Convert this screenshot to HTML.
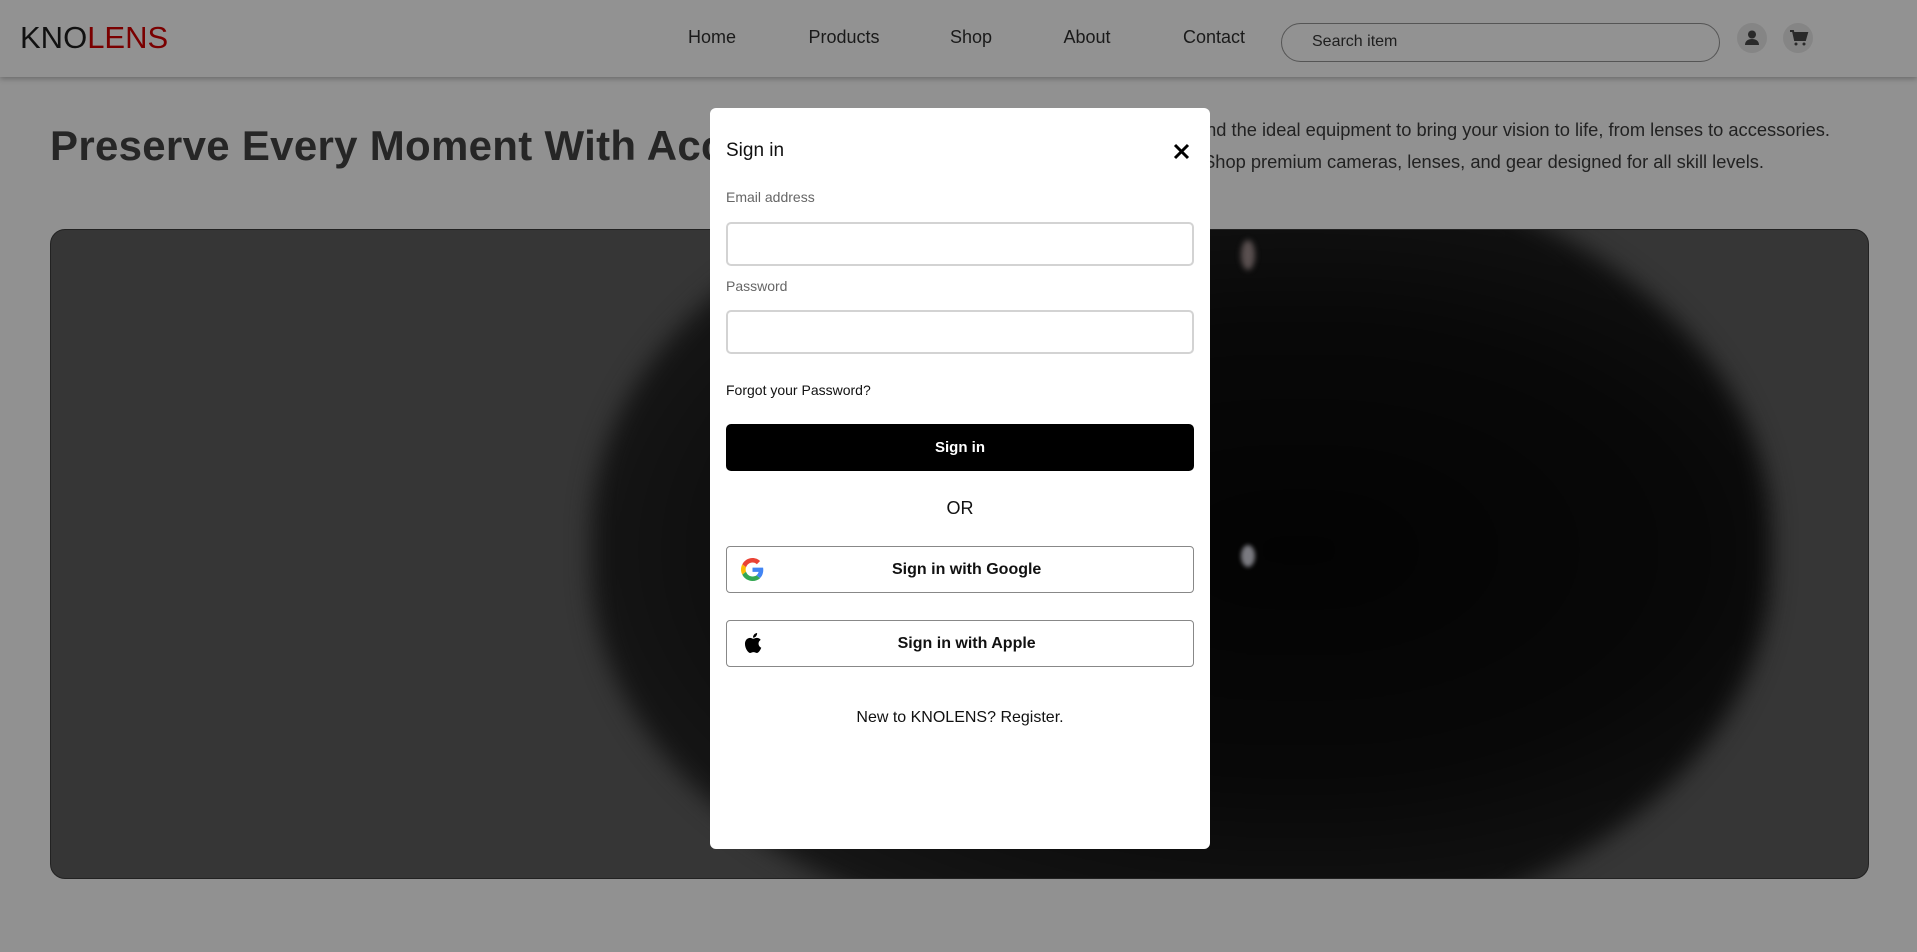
<!DOCTYPE html>
<html><head><meta charset="utf-8"><style>
*{margin:0;padding:0;box-sizing:border-box}
html,body{width:1917px;height:952px;overflow:hidden}
body{background:#919191;font-family:"Liberation Sans",sans-serif;position:relative;color:#1a1a1a}
.abs{position:absolute}
.nav{left:0;top:0;width:1917px;height:77px;background:#929292;box-shadow:0 2px 5px rgba(0,0,0,.25)}
.logo{left:20px;top:20px;font-size:31px;color:#111;letter-spacing:0}
.logo span{color:#7a0000}
.nl{top:27px;font-size:18px;color:#1a1a1a;transform:translateX(-50%)}
.search{left:1281px;top:23px;width:439px;height:39px;border:1px solid #555;border-radius:20px;font-size:16px;padding:9px 0 0 30px;color:#1e1e1e}
.ic{width:30px;height:30px;border-radius:50%;background:#858585;top:23px}
h1{left:50px;top:122px;font-size:42px;font-weight:bold;color:#262626;white-space:nowrap;letter-spacing:.3px}
.p{font-size:18.3px;color:#222;white-space:nowrap;text-align:right}
.hero{left:50px;top:229px;width:1819px;height:650px;border-radius:15px;background:#363636;overflow:hidden;border:1px solid #222}
.modal{left:710px;top:108px;width:500px;height:741px;background:#fff;border-radius:6px}
.lbl{font-size:14px;color:#666}
.inp{left:16px;width:468px;height:44px;border:2px solid #d3d3d3;border-radius:5px}
.btn{left:16px;width:468px;height:47px;border:1px solid #888;border-radius:4px;font-size:16px;font-weight:bold;color:#111;text-align:center;line-height:45px}
</style></head><body>
<div class="abs nav"></div>
<div class="abs logo">KNO<span>LENS</span></div>
<div class="abs nl" style="left:712px">Home</div>
<div class="abs nl" style="left:844px">Products</div>
<div class="abs nl" style="left:971px">Shop</div>
<div class="abs nl" style="left:1087px">About</div>
<div class="abs nl" style="left:1214px">Contact</div>
<div class="abs search">Search item</div>
<div class="abs ic" style="left:1737px"><svg width="30" height="30" viewBox="0 0 30 30"><circle cx="15" cy="11.5" r="4" fill="#2a2a2a"/><path d="M8 22c0-4 3-6 7-6s7 2 7 6z" fill="#2a2a2a"/></svg></div>
<div class="abs ic" style="left:1783px"><svg width="30" height="30" viewBox="0 0 30 30"><path d="M7 8h3l2 9h10l2-7H11" fill="none" stroke="#2a2a2a" stroke-width="2"/><path d="M11 10h13l-2 7H12z" fill="#2a2a2a"/><circle cx="13" cy="21" r="1.5" fill="#2a2a2a"/><circle cx="21" cy="21" r="1.5" fill="#2a2a2a"/></svg></div>
<h1 class="abs">Preserve Every Moment With Accuracy And Clarity</h1>
<div class="abs p" style="right:87px;top:119px">Find the ideal equipment to bring your vision to life, from lenses to accessories.</div>
<div class="abs p" style="right:153px;top:151px">Shop premium cameras, lenses, and gear designed for all skill levels.</div>
<div class="abs hero">
<div class="abs" style="left:540px;top:-80px;width:1180px;height:800px;border-radius:48%;background:radial-gradient(ellipse at 60% 50%,#030303 0%,#080808 40%,#121212 65%,#1c1c1c 85%,#262626 100%);filter:blur(12px)"></div>
<div class="abs" style="left:1190px;top:315px;width:14px;height:22px;border-radius:50%;background:#7a7a80;filter:blur(2px)"></div>
<div class="abs" style="left:1190px;top:10px;width:14px;height:30px;border-radius:50%;background:#5a5050;filter:blur(3px)"></div>
</div>
<div class="abs modal">
<div class="abs" style="left:16px;top:32px;font-size:19px;color:#111">Sign in</div>
<svg class="abs" style="left:463px;top:35px" width="17" height="17" viewBox="0 0 17 17"><path d="M2 2L15 15M15 2L2 15" stroke="#000" stroke-width="3"/></svg>
<div class="abs lbl" style="left:16px;top:81px">Email address</div>
<div class="abs inp" style="top:114px"></div>
<div class="abs lbl" style="left:16px;top:170px">Password</div>
<div class="abs inp" style="top:202px"></div>
<div class="abs" style="left:16px;top:274px;font-size:14px;color:#111">Forgot your Password?</div>
<div class="abs btn" style="top:316px;background:#000;border-color:#000;color:#fff;font-size:15px;border-radius:5px">Sign in</div>
<div class="abs" style="left:0;width:500px;text-align:center;top:390px;font-size:18px;color:#111">OR</div>
<div class="abs btn" style="top:438px">&nbsp;&nbsp;&nbsp;Sign in with Google
<svg class="abs" style="left:14px;top:11px" width="23" height="23" viewBox="0 0 48 48"><path fill="#EA4335" d="M24 9.5c3.5 0 6.6 1.2 9.1 3.6l6.8-6.8C35.8 2.4 30.3 0 24 0 14.6 0 6.6 5.4 2.7 13.3l7.9 6.1C12.5 13.7 17.8 9.5 24 9.5z"/><path fill="#4285F4" d="M46.5 24.5c0-1.6-.2-3.1-.4-4.5H24v9h12.7c-.6 2.9-2.2 5.4-4.7 7.1l7.6 5.9c4.4-4.1 6.9-10.1 6.9-17.5z"/><path fill="#FBBC05" d="M10.5 28.6c-.5-1.4-.8-3-.8-4.6s.3-3.2.8-4.6l-7.9-6.1C1 16.5 0 20.1 0 24s1 7.5 2.7 10.7z"/><path fill="#34A853" d="M24 48c6.5 0 11.9-2.1 15.9-5.8L32.3 36.3c-2.1 1.4-4.9 2.3-8.3 2.3-6.2 0-11.5-4.2-13.4-9.9l-7.9 6.1C6.6 42.6 14.6 48 24 48z"/></svg></div>
<div class="abs btn" style="top:512px">&nbsp;&nbsp;&nbsp;Sign in with Apple
<svg class="abs" style="left:16px;top:11px" width="19" height="22" viewBox="0 0 384 460"><path fill="#000" d="M318 244c0-53 43-78 45-80-25-36-63-41-76-41-33-3-63 19-80 19s-42-19-69-18c-35 1-68 21-86 53-37 64-9 158 26 210 18 25 39 53 66 52 27-1 37-17 69-17s41 17 69 17c29-1 47-26 64-51 20-29 28-57 29-59-1 0-56-21-57-85zM266 88c15-18 25-43 22-68-21 1-47 14-62 32-14 16-26 42-23 66 24 2 48-12 63-30z"/></svg></div>
<div class="abs" style="left:0;width:500px;text-align:center;top:601px;font-size:16px;color:#111">New to KNOLENS? Register.</div>
</div>
</body></html>
